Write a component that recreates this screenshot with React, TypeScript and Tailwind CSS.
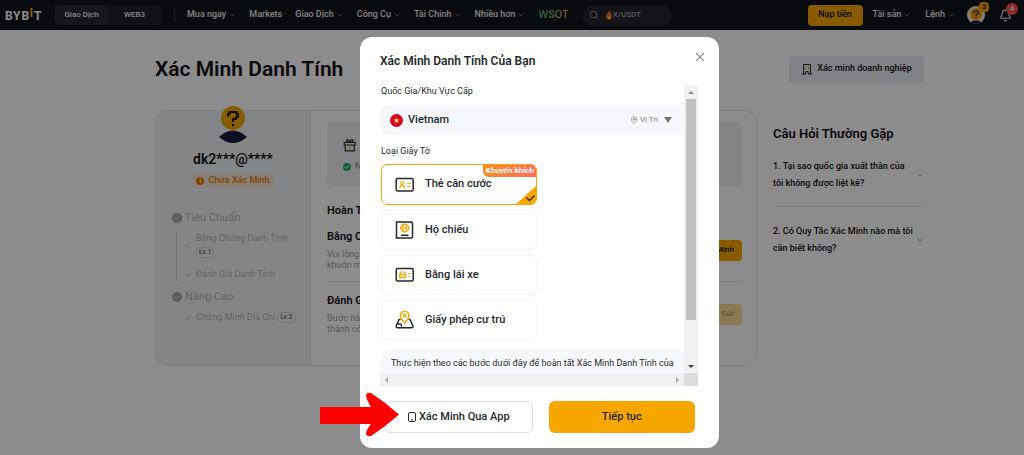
import React from "react";
import { Bell, Check, ChevronDown, MapPin, Search, X } from "lucide-react";

const navItems = [
  { label: "Mua ngay", menu: true },
  { label: "Markets", menu: false },
  { label: "Giao Dịch", menu: true },
  { label: "Công Cụ", menu: true },
  { label: "Tài Chính", menu: true },
  { label: "Nhiều hơn", menu: true },
];

function Logo() {
  return (
    <svg viewBox="0 0 37 16" className="h-4 w-[37px]" role="img" aria-label="BYBIT">
      <g fill="#fff" fontFamily="Roboto, sans-serif" fontSize="12" fontWeight="700">
        <text x="0" y="13">B</text>
        <text x="8" y="13">Y</text>
        <text x="16.500" y="13">B</text>
        <text x="29" y="13">T</text>
      </g>
      <rect x="25.500" y="1" width="2" height="9" fill="#f7a600" />
    </svg>
  );
}

function Avatar({ className }: { className: string }) {
  return (
    <svg viewBox="0 0 30 38" className={className} aria-hidden="true">
      <path d="M1 31 Q15 18 29 31 Q15 43 1 31Z" fill="#1a1b3c" />
      <circle cx="15" cy="12" r="12" fill="#f7a600" />
      <path
        d="M10 10.500V8h1.500V6h7v2H20v3h-2v2h-3v3M15 18v2.200"
        fill="none"
        stroke="#111"
        strokeWidth="2"
      />
    </svg>
  );
}

function BuildingIcon() {
  return (
    <svg viewBox="0 0 12 12" className="h-3 w-3" fill="none" stroke="#25282c" aria-hidden="true">
      <path d="M2.500 11V1.500h7V11M.8 11h4M7.200 11h4M4.800 11V8.500h2.400V11" />
      <path d="M4.500 3.500v3M7.500 3.500v3" stroke="#f7a600" />
    </svg>
  );
}

function GiftIcon() {
  return (
    <svg viewBox="0 0 14 14" className="size-3.5" fill="none" stroke="#25282c" strokeWidth="1.200" aria-hidden="true">
      <path d="M1.200 4.500h11v2.500h-11zM2.200 7v5.800h9V7M6.700 4.500C5 4.500 3 3.800 3.600 2.200 4.500.8 6.300 2.500 6.700 4.500ZM6.700 4.500c1.700 0 3.700-.7 3.100-2.300C8.900.8 7.100 2.500 6.700 4.500Z" />
      <path d="M6.700 8.500v3M12 1.200v1.600M11.200 2h1.600" stroke="#f7a600" />
    </svg>
  );
}

function PhoneIcon() {
  return (
    <svg viewBox="0 0 10 12" className="h-3 w-2.5" fill="none" stroke="#25282c" aria-hidden="true">
      <rect x="1.500" y="1.500" width="7" height="9" rx="1.500" />
      <path d="M4 8.800h2" />
    </svg>
  );
}

function NavLink({ label, menu }: { label: string; menu: boolean }) {
  return (
    <a href="#" className="flex items-center gap-0.5 whitespace-nowrap">
      {label}
      {menu && <ChevronDown className="size-2 opacity-60" />}
    </a>
  );
}

function Header() {
  return (
    <header className="flex h-[30px] items-center bg-[#121319] pr-3 pl-[5px] text-[9px] font-medium text-[#eeeeee]">
      <a href="#" className="shrink-0">
        <Logo />
      </a>
      <div className="ml-[13px] flex h-5 w-[106px] shrink-0 rounded-sm bg-[#1e1f26] text-[8px]">
        <button className="flex-1 rounded-sm bg-[#292a31]">Giao Dịch</button>
        <button className="flex-1">WEB3</button>
      </div>
      <div className="mr-3 ml-[13px] h-3 w-px shrink-0 bg-[#3a3b42]" />
      <nav className="flex items-center gap-[13px]">
        {navItems.map((item) => (
          <NavLink key={item.label} {...item} />
        ))}
        <a
          href="#"
          className="bg-linear-to-r from-[#23c08b] via-[#7bc96a] to-[#f08a24] bg-clip-text text-[11px] text-transparent"
        >
          WSOT
        </a>
      </nav>
      <div className="ml-3.5 flex h-[21px] w-[89px] items-center rounded-full bg-[#25262d] pr-2 pl-1.5 text-[#a0a0a5]">
        <Search className="size-2.5 shrink-0" />
        <svg viewBox="0 0 8 10" className="ml-1.5 h-2.5 w-2 shrink-0" aria-hidden="true">
          <path d="M4 0C4 3 1 3.500 1 6.500a3 3 0 0 0 6 0C7 4 5 3 4 0Z" fill="#f2601c" />
          <path d="M4 5C4 6.500 2.600 6.700 2.600 8a1.400 1.400 0 0 0 2.800 0C5.400 7 4.400 6.400 4 5Z" fill="#ffc42e" />
        </svg>
        <input
          aria-label="Tìm kiếm"
          placeholder="X/USDT"
          className="h-4 min-w-0 flex-1 bg-transparent text-[8px] leading-4 outline-none placeholder:text-[#a0a0a5]"
        />
      </div>
      <div className="ml-auto flex items-center">
        <button className="h-[21px] w-[55px] rounded-sm bg-[#f7a600] text-[#121214]">Nạp tiền</button>
        <div className="ml-2.5 flex gap-3.5">
          <NavLink label="Tài sản" menu />
          <NavLink label="Lệnh" menu />
        </div>
        <a href="#" aria-label="Tài khoản" className="relative ml-3 size-[18px]">
          <span className="flex size-[18px] justify-center overflow-hidden rounded-full bg-[#f4ead8]">
            <Avatar className="mt-0.5 h-[19px] w-4" />
          </span>
          <span className="absolute -top-1 -right-1 flex h-2.5 w-2.5 items-center justify-center rounded-sm bg-[#f7a600] text-[8px] text-[#121214]">
            3
          </span>
        </a>
        <button aria-label="Thông báo" className="relative ml-3.5">
          <Bell className="size-[13px]" />
          <span className="absolute -top-1.5 -right-1.5 flex size-3 items-center justify-center rounded-full bg-[#ff4d50] text-[8px]">
            4
          </span>
        </button>
      </div>
    </header>
  );
}

function Stage({ label }: { label: string }) {
  return (
    <h3 className="flex items-center gap-[3px] text-[11px] leading-4">
      <span className="flex size-2.5 items-center justify-center rounded-full bg-[#a4a6aa]">
        <Check className="size-1.5 text-[#eef1f5]" strokeWidth={4} />
      </span>
      {label}
    </h3>
  );
}

function Level({ children }: { children: React.ReactNode }) {
  return (
    <span className="rounded-sm border border-[#d5d8dc] px-0.5 text-[7px] leading-[9px] font-bold text-[#81858c]">
      {children}
    </span>
  );
}

function Step({ label, level, wrap }: { label: string; level?: string; wrap?: boolean }) {
  return (
    <div className="flex items-center gap-1">
      <Check className="size-2 shrink-0" strokeWidth={3} />
      <span
        className={
          wrap
            ? "flex flex-col items-start gap-0.5 text-[9px] leading-[13px] whitespace-nowrap"
            : "flex items-center gap-0.5 text-[9px] leading-[13px] whitespace-nowrap"
        }
      >
        {label}
        {level && <Level>{level}</Level>}
      </span>
    </div>
  );
}

function Sidebar() {
  return (
    <aside className="flex w-[155px] shrink-0 flex-col rounded-l-xl border-r border-[#e8eaed] bg-[#f1f3f6] text-[#b4b6ba]">
      <Avatar className="-mt-[5px] h-[38px] w-[30px] self-center" />
      <p className="mt-1.5 text-center text-[14px] leading-[18px] font-semibold text-[#121214]">dk2***@****</p>
      <p className="mt-1.5 flex h-3.5 items-center gap-1 self-center rounded-sm bg-[#f7ead9] px-1 text-[9px] font-medium text-[#e87c00]">
        <span className="flex size-2 items-center justify-center rounded-full bg-[#e87c00] text-[7px] text-white">!</span>
        Chưa Xác Minh
      </p>
      <div className="mt-[22px] px-4">
        <Stage label="Tiêu Chuẩn" />
        <div className="mt-1.5 ml-1 flex flex-col gap-2.5 border-l border-[#cfd2d6] pl-[7px]">
          <Step label="Bằng Chứng Danh Tính" level="Lv.1" wrap />
          <Step label="Đánh Giá Danh Tính" />
        </div>
        <div className="mt-2">
          <Stage label="Nâng Cao" />
        </div>
        <div className="mt-1.5 pl-3">
          <Step label="Chứng Minh Địa Chỉ" level="Lv.2" />
        </div>
      </div>
    </aside>
  );
}

function Task({ title, lines, action, muted }: { title: string; lines: string[]; action: string; muted?: boolean }) {
  return (
    <div className="flex items-center justify-between">
      <div>
        <h3 className="text-[11px] leading-4 font-semibold">{title}</h3>
        <div className="mt-1 text-[9px] leading-[11px] text-[#a0a3a8]">
          {lines.map((line) => (
            <p key={line}>{line}</p>
          ))}
        </div>
      </div>
      <button
        className={
          muted
            ? "h-[21px] w-[60px] rounded-sm bg-[#fbdc98] pr-2 text-right text-[8px] text-[#a08a5c]"
            : "h-[21px] w-[60px] rounded-sm bg-[#f7a600] pr-2 text-right text-[8px] font-medium"
        }
      >
        {action}
      </button>
    </div>
  );
}

function VerificationCard() {
  return (
    <section className="flex h-64 flex-1 rounded-xl border border-[#e8eaed]">
      <Sidebar />
      <div className="flex-1 pt-[11px] pr-3.5 pl-4">
        <div className="flex h-16 flex-col gap-2 rounded-md bg-[#edf0f4] px-4 pt-4">
          <GiftIcon />
          <p className="flex items-center gap-1 text-[9px] text-[#81858c]">
            <span className="flex size-2 items-center justify-center rounded-full bg-[#20b26c]">
              <Check className="size-1.5 text-white" strokeWidth={4} />
            </span>
            Nâng
          </p>
        </div>
        <h2 className="mt-4 text-[11px] leading-[18px] font-semibold">Hoàn Tất</h2>
        <div className="mt-[9px] border-b border-[#e4e7eb] pb-2.5">
          <Task title="Bằng Chứng" lines={["Vui lòng", "khuôn mặt"]} action="Xác Minh" />
        </div>
        <div className="mt-[11px]">
          <Task title="Đánh Giá" lines={["Bước này", "thành công"]} action="Gửi" muted />
        </div>
      </div>
    </section>
  );
}

function Question({ lines }: { lines: string[] }) {
  return (
    <button className="flex w-full items-center justify-between text-left text-[9px] leading-[17px] font-medium">
      <span className="whitespace-nowrap">
        {lines[0]}
        <br />
        {lines[1]}
      </span>
      <ChevronDown className="size-2 shrink-0 text-[#81858c]" />
    </button>
  );
}

function Page() {
  return (
    <main className="pt-6 pr-[100px] pl-[155px] text-[#121214]">
      <div className="flex h-[30px] items-center justify-between">
        <h1 className="text-[21px] leading-[30px] font-semibold">Xác Minh Danh Tính</h1>
        <button className="flex h-[27px] w-[135px] items-center justify-center gap-1 rounded-sm bg-[#e9edf2] text-[9px] font-medium">
          <BuildingIcon />
          Xác minh doanh nghiệp
        </button>
      </div>
      <div className="mt-[26px] flex gap-4">
        <VerificationCard />
        <section className="w-[151px] shrink-0 pt-3.5">
          <h2 className="text-[13px] leading-5 font-semibold">Câu Hỏi Thường Gặp</h2>
          <div className="mt-3.5 border-b border-[#e8eaed] pb-3.5">
            <Question lines={["1. Tại sao quốc gia xuất thân của", "tôi không được liệt kê?"]} />
          </div>
          <div className="mt-4">
            <Question lines={["2. Có Quy Tắc Xác Minh nào mà tôi", "cần biết không?"]} />
          </div>
        </section>
      </div>
    </main>
  );
}

function CardOutline({ children }: { children: React.ReactNode }) {
  return (
    <svg viewBox="0 0 20 20" className="size-5" fill="none" strokeWidth="1.500" strokeLinecap="round" aria-hidden="true">
      <rect x="1.200" y="3.500" width="17" height="12.500" rx="1.500" stroke="#25282c" />
      <g stroke="#f7a600" strokeWidth="1.200">
        {children}
      </g>
    </svg>
  );
}

const idIcon = (
  <CardOutline>
    <circle cx="7.200" cy="8" r="1.500" />
    <path d="M4.700 13c.3-3.500 4.700-3.500 5 0M12.700 8.500h2.500M12.700 11.500h2.500" />
  </CardOutline>
);

const licenceIcon = (
  <CardOutline>
    <path d="M4.700 9.700l1-2.700h4l1 2.700v2.600h-6zM4.700 9.700h6M5.700 13v-1M9.700 13v-1M13.700 8.500h1.500M13.700 11.500h1.500" />
  </CardOutline>
);

const passportIcon = (
  <svg viewBox="0 0 20 20" className="size-5" fill="none" strokeWidth="1.500" strokeLinecap="round" aria-hidden="true">
    <path d="M1.500 2h14.500a1.500 1.500 0 0 1 1.500 1.500v13a1.500 1.500 0 0 1-1.500 1.500H1.500zM6.500 15.200h6.500" stroke="#25282c" />
    <g stroke="#f7a600" strokeWidth="1.200">
      <circle cx="9.700" cy="8" r="4" />
      <ellipse cx="9.700" cy="8" rx="1.700" ry="4" />
      <path d="M5.700 8h8" />
    </g>
  </svg>
);

const residenceIcon = (
  <svg viewBox="0 0 20 20" className="size-5" fill="none" strokeWidth="1.500" strokeLinecap="round" strokeLinejoin="round" aria-hidden="true">
    <path d="M5 9.500H4L1.200 16Q.9 17.700 2.500 17.700H16.700Q18.300 17.700 18 16L15 9.500H14.200M2.500 14H5Q6.500 14 6.500 16" stroke="#25282c" />
    <path d="M9.700 13C7.200 10.500 5.500 8 5.500 5.500a4.200 4.200 0 0 1 8.400 0c0 2.500-1.700 5-4.200 7.500Z" fill="#fff" stroke="#f7a600" />
    <circle cx="9.700" cy="5.500" r="1.400" stroke="#f7a600" strokeWidth="1.200" />
  </svg>
);

const documents = [
  { id: "id-card", label: "Thẻ căn cước", icon: idIcon },
  { id: "passport", label: "Hộ chiếu", icon: passportIcon },
  { id: "licence", label: "Bằng lái xe", icon: licenceIcon },
  { id: "residence", label: "Giấy phép cư trú", icon: residenceIcon },
];

function DocumentOption({ doc, selected, onSelect }: { doc: (typeof documents)[number]; selected: boolean; onSelect: () => void }) {
  return (
    <label
      className={
        selected
          ? "relative flex h-[41px] items-center gap-2.5 overflow-hidden rounded-md border border-[#f7a600] pl-[13px]"
          : "relative flex h-10 items-center gap-2.5 overflow-hidden rounded-md border border-[#f3f4f6] pl-[13px]"
      }
    >
      <input type="radio" name="document" checked={selected} onChange={onSelect} className="sr-only" />
      {doc.icon}
      <span className="text-[11px] font-medium">{doc.label}</span>
      {doc.id === "id-card" && (
        <span className="absolute -top-px -right-px h-[13px] rounded-bl-md bg-linear-to-r from-[#fb8c10] to-[#ff6c5c] px-[3px] text-[8px] leading-[13px] font-bold text-white">
          Khuyến khích
        </span>
      )}
      {selected && (
        <svg viewBox="0 0 20 18" className="absolute right-0 bottom-0 h-[18px] w-5" aria-hidden="true">
          <path d="M20 0V18H0Z" fill="#f7a600" />
          <path d="M10.500 11.500l3 3 5-5" fill="none" stroke="#25282c" strokeWidth="1.300" />
        </svg>
      )}
    </label>
  );
}

function ScrollFrame({ children }: { children: React.ReactNode }) {
  return (
    <div className="mt-[13px] grid grid-cols-[1fr_14px] grid-rows-[288px_13px]">
      <div className="min-w-0 overflow-hidden pl-px">{children}</div>
      <div className="flex flex-col items-center bg-[#f1f1f1]" aria-hidden="true">
        <span className="flex h-[14px] items-center">
          <span className="border-x-[3px] border-b-[3px] border-x-transparent border-b-[#8a8a8a]" />
        </span>
        <span className="h-[221px] w-2.5 bg-[#c1c1c1]" />
        <span className="mt-auto flex h-[14px] items-center">
          <span className="border-x-[3px] border-t-[3px] border-x-transparent border-t-[#404040]" />
        </span>
      </div>
      <div className="flex items-center justify-between bg-[#f1f1f1] px-[5px]" aria-hidden="true">
        <span className="border-y-[3px] border-r-[3px] border-y-transparent border-r-[#a0a0a0]" />
        <span className="border-y-[3px] border-l-[3px] border-y-transparent border-l-[#a0a0a0]" />
      </div>
      <div className="bg-[#dcdcdc]" />
    </div>
  );
}

function Dialog() {
  const [selected, setSelected] = React.useState("id-card");
  return (
    <div
      role="dialog"
      aria-labelledby="dialog-title"
      className="relative w-[359px] rounded-xl bg-white pt-[14px] pr-[21px] pb-[15px] pl-5 text-[#25282c]"
    >
      <div className="flex justify-between">
        <h2 id="dialog-title" className="text-[12px] leading-[21px] font-semibold">
          Xác Minh Danh Tính Của Bạn
        </h2>
        <button aria-label="Đóng" className="-mr-2 flex size-3 items-center justify-center text-[#8f9299]">
          <X className="size-3.5 shrink-0" strokeWidth={2} />
        </button>
      </div>
      <ScrollFrame>
        <label htmlFor="country" className="block text-[9px] leading-[13px]">
          Quốc Gia/Khu Vực Cấp
        </label>
        <div className="mt-[7px] flex h-[30px] items-center rounded-md bg-[#f5f7fa] pr-3 pl-[9px]">
          <svg viewBox="0 0 13 13" className="size-[13px]" aria-hidden="true">
            <circle cx="6.500" cy="6.500" r="6.500" fill="#d80027" />
            <path d="M6.500 3.200l.8 2.300h2.400l-1.900 1.500.7 2.300-2-1.400-2 1.400.7-2.300-1.900-1.500h2.400z" fill="#ffda44" />
          </svg>
          <select
            id="country"
            className="ml-[5px] h-5 min-w-0 flex-1 appearance-none bg-transparent text-[11px] font-medium outline-none"
          >
            <option>Vietnam</option>
          </select>
          <MapPin className="size-2 text-[#81858c]" />
          <span className="ml-0.5 text-[8px] text-[#81858c]">Vị Trí</span>
          <span className="ml-1.5 border-x-[4px] border-t-[6px] border-x-transparent border-t-[#71757a]" />
        </div>
        <fieldset>
          <legend className="pt-2.5 text-[9px] leading-[13px]">Loại Giấy Tờ</legend>
          <div className="mt-1.5 flex w-[156px] flex-col gap-[5px]">
            {documents.map((doc) => (
              <DocumentOption key={doc.id} doc={doc} selected={selected === doc.id} onSelect={() => setSelected(doc.id)} />
            ))}
          </div>
        </fieldset>
        <p className="mt-2.5 h-10 rounded-md bg-[#f7f8fc] px-2.5 pt-[7px] text-[9px] leading-[13px] whitespace-nowrap">
          Thực hiện theo các bước dưới đây để hoàn tất Xác Minh Danh Tính của
        </p>
      </ScrollFrame>
      <div className="mt-[15px] flex gap-4 pr-[3px] pl-1">
        <button className="flex h-8 flex-1 items-center justify-center gap-0.5 rounded-md border border-[#dcdee2] text-[11px] font-medium">
          <PhoneIcon />
          Xác Minh Qua App
        </button>
        <button className="h-8 flex-1 rounded-md bg-[#f7a600] text-[11px] font-medium">Tiếp tục</button>
      </div>
      <svg viewBox="0 0 80 46" className="absolute bottom-[10px] -left-10 h-[46px] w-20" aria-hidden="true">
        <path
          d="M0 15H51Q46 7 46 3Q47 0 51 1Q65 10 79 22.500Q65 35 51 44Q47 45 46 42Q46 38 51 32H0Z"
          fill="#f00"
        />
      </svg>
    </div>
  );
}

export default function App() {
  return (
    <div className="min-h-screen bg-white font-[Roboto,'Noto_Sans',sans-serif]">
      <Header />
      <Page />
      <div className="fixed inset-0 flex items-start justify-center bg-black/45 pt-[37px] pl-[55px]">
        <Dialog />
      </div>
    </div>
  );
}
